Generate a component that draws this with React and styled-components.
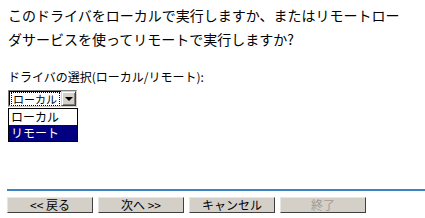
import React from "react";
import styled, { createGlobalStyle } from "styled-components";

const GlobalStyle = createGlobalStyle`
  html, body {
    margin: 0;
    padding: 0;
    background: #ffffff;
  }
  body {
    font-family: "Noto Sans CJK JP", "Liberation Sans", sans-serif;
    color: #000;
  }
`;

const Page = styled.div`
  width: 425px;
  height: 218px;
  box-sizing: border-box;
  padding: 3px 0 5px 8px;
  display: flex;
  flex-direction: column;
  overflow: hidden;
`;

const Question = styled.p`
  margin: 0;
  width: 396px;
  font-size: 14px;
  line-height: 24px;
`;

const Label = styled.div`
  margin-top: 18px;
  font-size: 12px;
  line-height: 16px;
`;

const SelectWrap = styled.div`
  position: relative;
  margin-top: 5px;
  width: 69px;
`;

const SelectBox = styled.div`
  display: flex;
  height: 17px;
  box-sizing: border-box;
  border: 1px solid #808080;
  border-right-color: #d4d0c8;
  border-bottom-color: #d4d0c8;
  background: #fff;
`;

const SelectField = styled.div`
  flex: 1;
  min-width: 0;
  display: flex;
  align-items: center;
  border: 1px solid #000;
  border-right: none;
  border-bottom-color: #fff;
  padding: 0 1px;
`;

const FocusText = styled.span`
  flex: 1;
  height: 12px;
  display: flex;
  align-items: center;
  padding: 0 1px;
  border: 1px dotted #000;
  font-size: 11px;
  line-height: 12px;
  white-space: nowrap;
  overflow: hidden;
`;

const ArrowButton = styled.div`
  width: 15px;
  box-sizing: border-box;
  background: #d4d0c8;
  border: 1px solid;
  border-color: #d4d0c8 #404040 #404040 #d4d0c8;
  box-shadow: inset 1px 1px 0 #fff, inset -1px -1px 0 #808080;
  display: flex;
  align-items: center;
  justify-content: center;
`;

const Arrow = styled.span`
  width: 0;
  height: 0;
  border-left: 4px solid transparent;
  border-right: 4px solid transparent;
  border-top: 4px solid #000;
`;

const Menu = styled.ul`
  position: absolute;
  top: 18px;
  left: 0;
  width: 70px;
  margin: 0;
  padding: 0;
  list-style: none;
  box-sizing: border-box;
  border: 1px solid #000;
  background: #fff;
`;

const Option = styled.li`
  height: 16px;
  padding-left: 2px;
  font-size: 12px;
  line-height: 16px;
  white-space: nowrap;
  background: ${({ selected }) => (selected ? "#000080" : "#fff")};
  color: ${({ selected }) => (selected ? "#fff" : "#000")};
`;

const Footer = styled.div`
  margin-top: auto;
`;

const Rule = styled.div`
  height: 2px;
  margin-left: -1px;
  background: #3c84c4;
`;

const ButtonRow = styled.div`
  display: flex;
  gap: 5px;
  margin-top: 6px;
  margin-left: -1px;
`;

const WizardButton = styled.button`
  width: 86px;
  height: 16px;
  padding: 0;
  box-sizing: border-box;
  background: #d4d0c8;
  border: 1px solid;
  border-color: #e8e6e0 #404040 #404040 #e8e6e0;
  font-family: "Noto Sans CJK JP", "Liberation Sans", sans-serif;
  font-size: 12px;
  line-height: 14px;
  color: ${({ disabled }) => (disabled ? "#a09c94" : "#000")};
`;

const options = ["ローカル", "リモート"];
const buttons = [
  { text: "<< 戻る" },
  { text: "次へ >>" },
  { text: "キャンセル" },
  { text: "終了", disabled: true },
];

export default function App() {
  return (
    <>
      <GlobalStyle />
      <Page>
        <Question>
          このドライバをローカルで実行しますか、またはリモートローダサービスを使ってリモートで実行しますか?
        </Question>
        <Label>ドライバの選択(ローカル/リモート):</Label>
        <SelectWrap>
          <SelectBox>
            <SelectField>
              <FocusText>ローカル</FocusText>
            </SelectField>
            <ArrowButton>
              <Arrow />
            </ArrowButton>
          </SelectBox>
          <Menu>
            {options.map((opt, i) => (
              <Option key={opt} selected={i === 1}>
                {opt}
              </Option>
            ))}
          </Menu>
        </SelectWrap>
        <Footer>
          <Rule />
          <ButtonRow>
            {buttons.map((b) => (
              <WizardButton key={b.text} disabled={b.disabled}>
                {b.text}
              </WizardButton>
            ))}
          </ButtonRow>
        </Footer>
      </Page>
    </>
  );
}
